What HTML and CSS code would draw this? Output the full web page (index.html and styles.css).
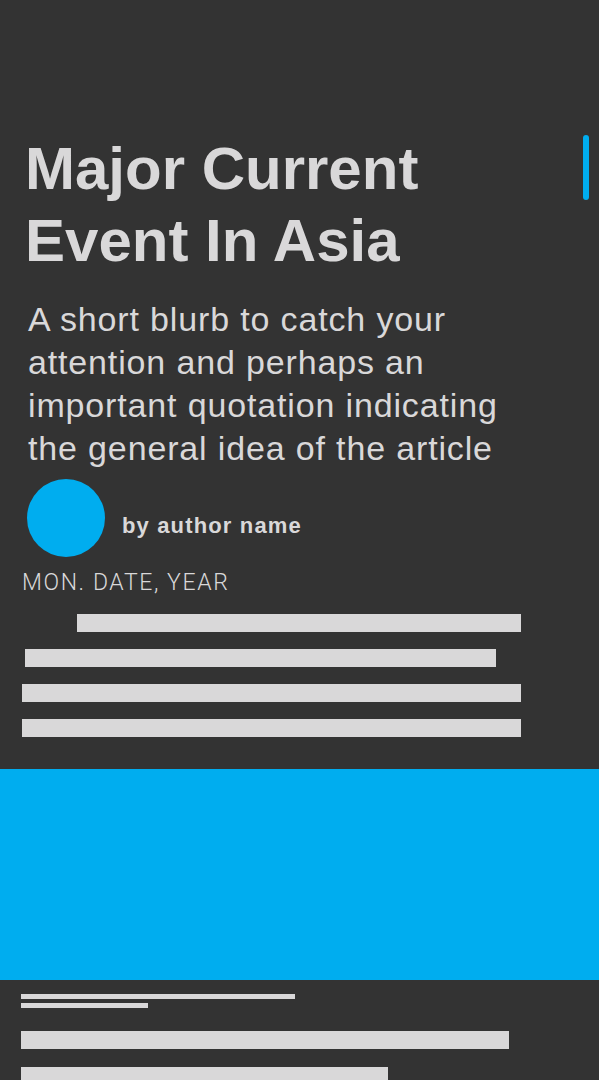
FILE: index.html
```html
<!DOCTYPE html>
<html lang="en">
<head>
<meta charset="utf-8">
<title>Major Current Event In Asia</title>
<link rel="stylesheet" href="styles.css">
</head>
<body>
<div class="page">
  <span class="scroll-indicator"></span>
  <header class="article-head">
    <h1 class="title">Major Current Event In Asia</h1>
    <p class="blurb">A short blurb to catch your attention and perhaps an important quotation indicating the general idea of the article</p>
    <div class="author">
      <span class="avatar"></span>
      <span class="author-name">by author name</span>
    </div>
    <div class="date">MON. DATE, YEAR</div>
  </header>
  <section class="lines">
    <div class="line line-indent"></div>
    <div class="line line-short"></div>
    <div class="line"></div>
    <div class="line"></div>
  </section>
  <div class="hero"></div>
  <section class="lower">
    <div class="caption">
      <div class="thin thin-long"></div>
      <div class="thin thin-short"></div>
    </div>
    <div class="line line-b1"></div>
    <div class="line line-b2"></div>
  </section>
</div>
</body>
</html>
```

FILE: styles.css
```css
html, body {
  margin: 0;
  padding: 0;
  background: #333333;
}
body {
  font-family: "Liberation Sans", Arial, sans-serif;
  color: #d9d8d9;
  overflow: hidden;
}
.page {
  position: relative;
  width: 599px;
  height: 1080px;
  overflow: hidden;
}
.scroll-indicator {
  position: absolute;
  top: 135px;
  right: 10px;
  width: 6px;
  height: 65px;
  border-radius: 3px;
  background: #00adef;
}
.article-head {
  padding: 133px 0 0 0;
}
.title {
  margin: 0 0 0 25px;
  font-size: 60px;
  line-height: 72px;
  font-weight: 700;
  width: 480px;
}
.blurb {
  margin: 21px 0 0 28px;
  width: 505px;
  font-size: 34px;
  line-height: 43px;
  letter-spacing: 0.85px;
}
.author {
  display: flex;
  align-items: center;
  gap: 17px;
  margin: 9px 0 0 27px;
}
.avatar {
  width: 78px;
  height: 78px;
  border-radius: 50%;
  background: #00adef;
  flex: none;
}
.author-name {
  padding-top: 16px;
  font-size: 22px;
  line-height: 26px;
  font-weight: 700;
  letter-spacing: 1.15px;
}
.date {
  margin: 12px 0 0 22px;
  font-family: Roboto, "Liberation Sans", sans-serif;
  font-weight: 300;
  font-size: 23px;
  line-height: 27px;
  letter-spacing: 1.6px;
}
.lines {
  display: flex;
  flex-direction: column;
  gap: 17px;
  padding: 18px 0 0 22px;
}
.line {
  height: 18px;
  width: 499px;
  background: #d9d8d9;
}
.line-indent {
  margin-left: 55px;
  width: 444px;
}
.line-short {
  margin-left: 3px;
  width: 471px;
}
.hero {
  margin-top: 32px;
  height: 211px;
  background: #00adef;
}
.lower {
  display: flex;
  flex-direction: column;
  padding: 14px 0 0 21px;
}
.caption {
  display: flex;
  flex-direction: column;
  gap: 4px;
}
.thin {
  height: 5px;
  background: #d9d8d9;
}
.thin-long { width: 274px; }
.thin-short { width: 127px; }
.line-b1 {
  margin-top: 23px;
  width: 488px;
}
.line-b2 {
  margin-top: 18px;
  width: 367px;
}
```
